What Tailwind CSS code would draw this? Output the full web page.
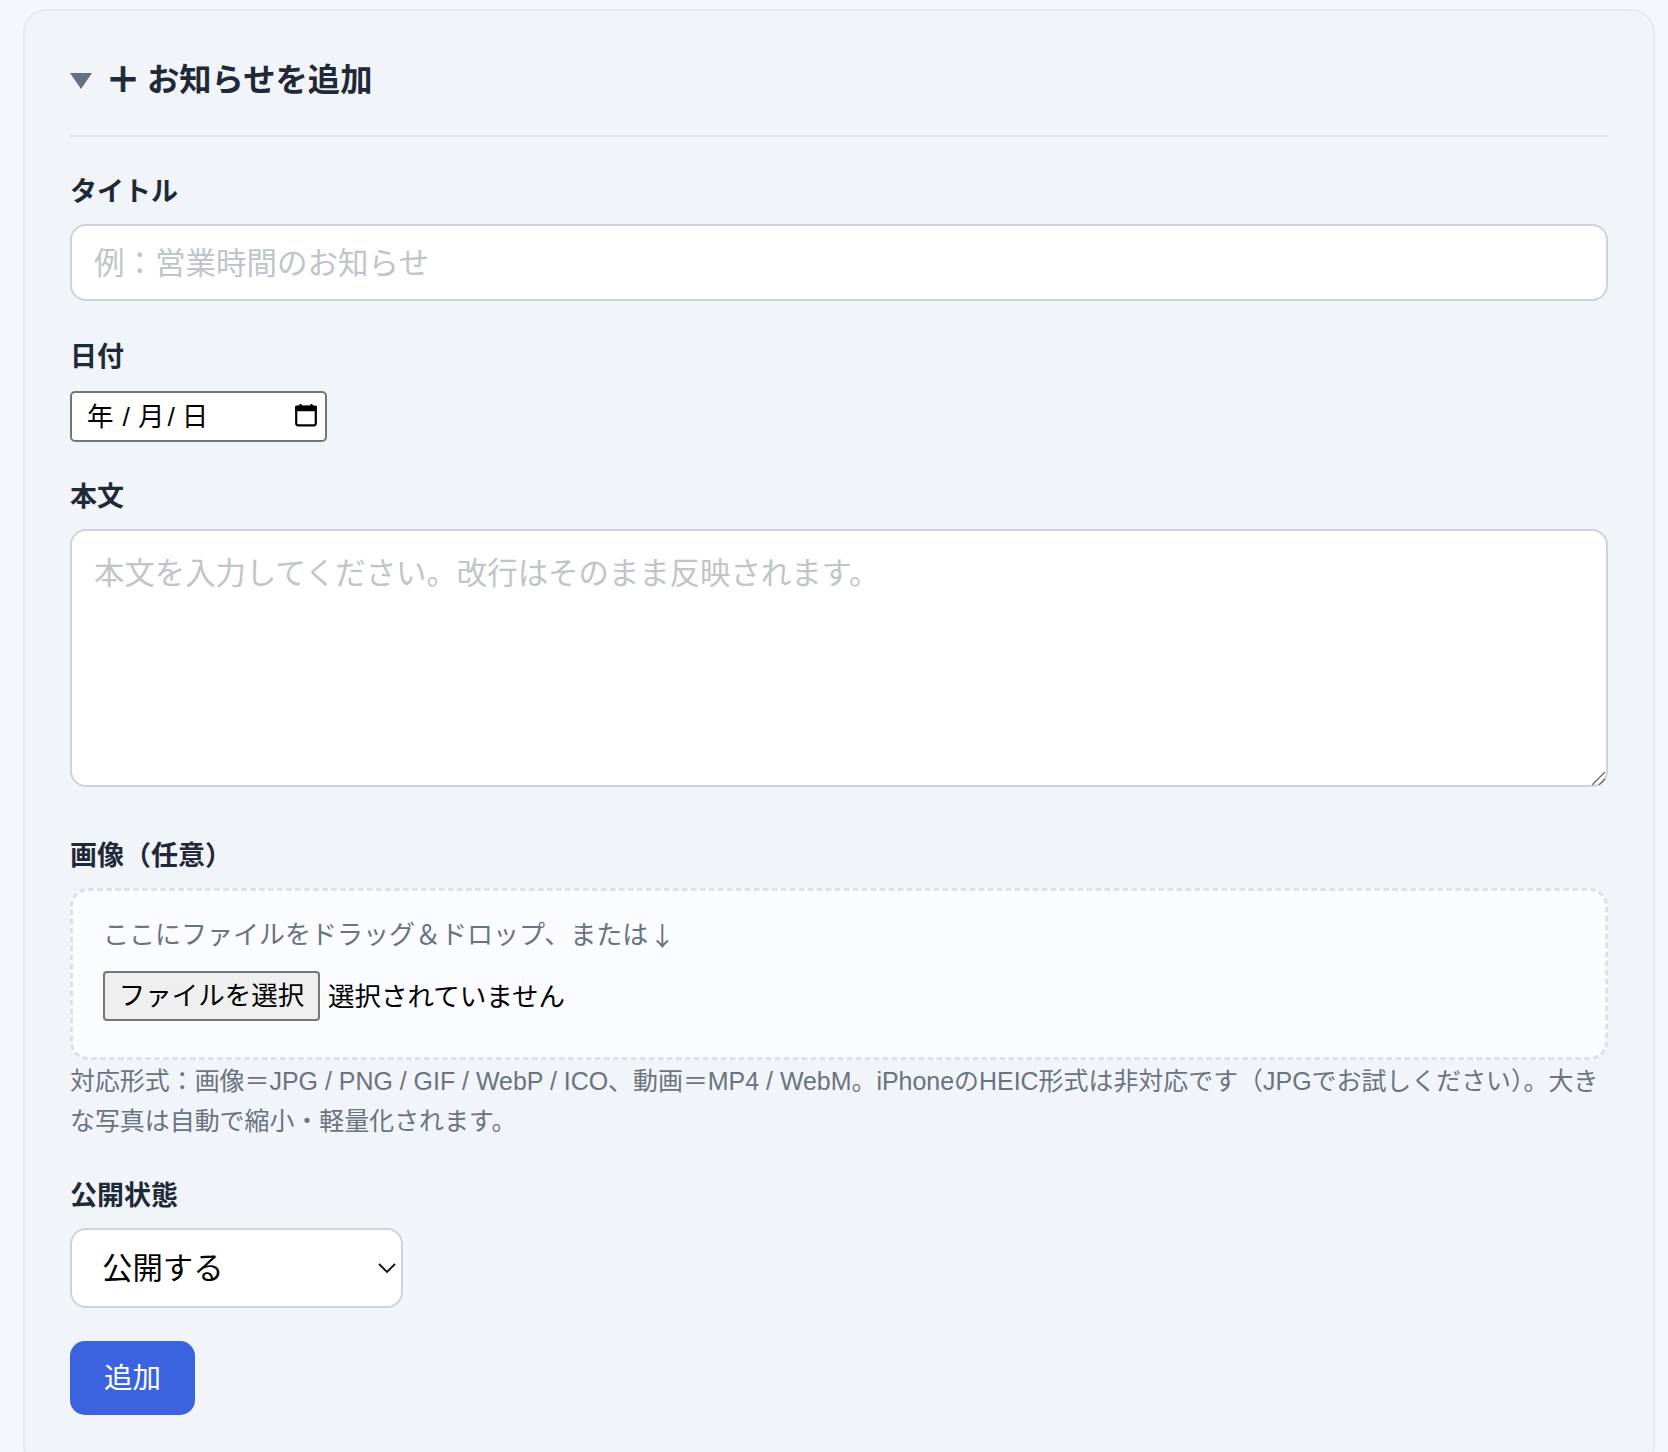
<!DOCTYPE html>
<html lang="ja">
<head>
    <meta charset="UTF-8" />
    <title>お知らせを追加</title>
    <script src="https://cdn.jsdelivr.net/npm/@tailwindcss/browser@4"></script>
</head>
<body class="bg-[#f5f7fb] font-['Liberation_Sans','Noto_Sans_CJK_JP',sans-serif] overflow-hidden">
<div class="h-[1452px] pt-[9px] pl-[23px] pr-[13px]">
    <section class="bg-[#f1f5f9] border-2 border-[#e6eaf0] rounded-[24px] h-[1460px] px-[45px] pt-[45px]">
        <div class="flex items-center h-[48px] text-[#1f2937]">
            <svg class="w-[22px] h-[16px] mt-[2px] mr-[16px]" viewBox="0 0 22 16"><path d="M0 0H22L11 16Z" fill="#667085"/></svg>
            <span class="text-[34px] font-bold leading-[48px] w-[34px] -ml-[2px] [-webkit-text-stroke:1px_#1f2937]">＋</span>
            <h2 class="text-[32.3px] font-bold leading-[48px] ml-[7px]">お知らせを追加</h2>
        </div>
        <div class="border-b-2 border-[#e3e7ed] h-[33px]"></div>

        <form>
            <label class="block mt-[37px] mb-[14px] text-[27px] leading-[36px] font-bold text-[#1f2937]" for="title">タイトル</label>
            <input id="title" type="text" placeholder="例：営業時間のお知らせ"
                   class="block w-full h-[77px] bg-white border-2 border-[#cdd2dc] rounded-[16px] pl-[22px] pr-[21px] pt-[2px] text-[30.5px] placeholder:text-[#c0c4cb]">

            <label class="block mt-[38px] mb-[16px] text-[27px] leading-[36px] font-bold text-[#1f2937]">日付</label>
            <div class="flex items-center w-[257px] h-[51px] bg-white border-2 border-[#767676] rounded-[5px] pl-[15px] pr-[8px] pt-[2px] text-[26.5px] text-black">
                <span>年</span><span class="ml-[9px]">/</span><span class="ml-[8px]">月</span><span class="ml-[3px]">/</span><span class="ml-[7px]">日</span>
                <svg class="ml-auto -mt-[5px] w-[22px] h-[24px]" viewBox="0 0 22 24" fill="none">
                    <rect x="1.2" y="3.7" width="19.6" height="18.6" rx="2" stroke="#000" stroke-width="2.2"/>
                    <path d="M1.2 3.7h19.6v3.6h-19.6zM5.5 1v3M16.5 1v3" fill="#000" stroke="#000" stroke-width="2"/>
                </svg>
            </div>

            <label class="block mt-[37px] mb-[14px] text-[27px] leading-[36px] font-bold text-[#1f2937]" for="body">本文</label>
            <div class="relative">
                <textarea id="body" placeholder="本文を入力してください。改行はそのまま反映されます。"
                          class="block w-full h-[258px] resize-none bg-white border-2 border-[#cdd2dc] rounded-[16px] pl-[22px] pr-[21px] py-[21px] text-[30.4px] leading-[42px] placeholder:text-[#c0c4cb]"></textarea>
                <svg class="absolute right-[1px] bottom-[1px] w-[16px] h-[16px]" viewBox="0 0 16 16" fill="none"><path d="M1 15L14 2M8 15l6-6" stroke="#6b6b6b" stroke-width="1.4"/></svg>
            </div>

            <label class="block mt-[51px] mb-[14px] text-[27px] leading-[36px] font-bold text-[#1f2937]">画像（任意）</label>
            <div class="h-[172px] bg-[#fafcff] border-[3px] border-dashed border-[#dde2ea] rounded-[18px] pl-[30px] pt-[24px]">
                <p class="text-[26px] leading-[36px] text-[#6b7280]">ここにファイルをドラッグ＆ドロップ、または<span class="inline-block ml-[1px] translate-y-[2px] font-['Noto_Sans_CJK_JP',sans-serif]">↓</span></p>
                <div class="flex items-center mt-[18px] text-[26.5px] text-black">
                    <button type="button" class="w-[217px] h-[50px] pt-[1px] bg-[#efefef] border-2 border-[#767676] rounded-[4px] leading-none">ファイルを選択</button>
                    <span class="ml-[8px] pt-[3px]">選択されていません</span>
                </div>
            </div>
            <p class="mt-[1px] text-[24.95px] leading-[40px] text-[#6b7280]">対応形式：画像＝JPG / PNG / GIF / WebP / ICO、動画＝MP4 / WebM。iPhoneのHEIC形式は非対応です（JPGでお試しください）。大きな写真は自動で縮小・軽量化されます。</p>

            <label class="block mt-[37px] mb-[14px] text-[27px] leading-[36px] font-bold text-[#1f2937]" for="status">公開状態</label>
            <div class="relative w-[333px]">
                <select id="status" class="block appearance-none w-full h-[80px] bg-white border-2 border-[#cdd2dc] rounded-[16px] pl-[30px] pt-[2px] text-[30.4px] text-black">
                    <option>公開する</option>
                </select>
                <svg class="absolute right-[7px] top-[34px] w-[18px] h-[12px]" viewBox="0 0 18 12" fill="none"><path d="M1 2l8 8 8-8" stroke="#111" stroke-width="1.8"/></svg>
            </div>

            <button type="submit" class="block mt-[33px] w-[125px] h-[74px] bg-[#3b63e0] rounded-[15px] text-[28.5px] text-white">追加</button>
        </form>
    </section>
</div>
</body>
</html>
